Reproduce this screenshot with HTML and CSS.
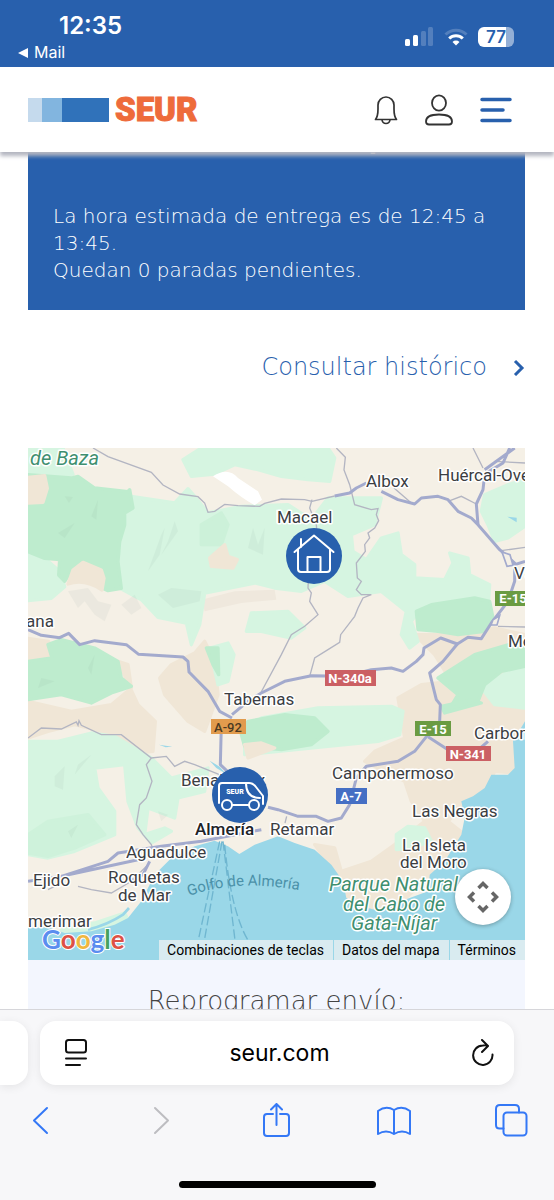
FILE: index.html
```html
<!DOCTYPE html>
<html lang="es">
<head>
    <meta charset="UTF-8">
    <meta name="viewport" content="width=device-width, initial-scale=1.0">
    <title>SEUR - Seguimiento de envío</title>
    <link rel="stylesheet" href="styles.css">
</head>
<body>
    <div class="status-bar">
        <div class="status-left">
            <span class="clock">12:35</span>
            <a class="back-app" href="#mail"><svg width="10" height="10" viewBox="0 0 10 10"><path d="M10 0v10L0 5z" fill="currentColor"/></svg>Mail</a>
        </div>
        <div class="status-right">
            <svg width="29" height="20" viewBox="0 0 29 20" fill="#fff">
                <rect x="0" y="12" width="5" height="7" rx="1.5"/>
                <rect x="8" y="8" width="5" height="11" rx="1.5"/>
                <rect x="16" y="4" width="5" height="15" rx="1.5" opacity=".2"/>
                <rect x="23" y="0" width="5" height="19" rx="1.5" opacity=".2"/>
            </svg>
            <svg width="24" height="20" viewBox="0 0 24 20" fill="none" stroke="#fff" stroke-width="3">
                <path d="M1.5 7.5a15 15 0 0 1 21 0" opacity=".2"/>
                <path d="M5.200 11.500a9.800 9.800 0 0 1 13.600 0"/>
                <path d="M8.500 15a5 5 0 0 1 7 0L12 18.500z" fill="#fff" stroke="none"/>
            </svg>
            <span class="battery">77</span>
        </div>
    </div>

    <header class="header">
        <a class="logo" href="/" aria-label="SEUR">
            <span class="logo-bars"><i></i><i></i><i></i></span>
            <span class="logo-name">SEUR</span>
        </a>
        <nav class="nav">
            <button type="button" aria-label="Notificaciones">
                <svg width="24" height="30" viewBox="0 0 24 30" fill="none" stroke="#333" stroke-width="1.700" stroke-linejoin="round">
                    <path d="M1.500 24.500C3.500 22 4 18.500 4 14V10a8 8 0 0 1 16 0v4c0 4.500.5 8 2.500 10.500z"/>
                    <path d="M8 24.500a4 4 0 0 0 8 0"/>
                </svg>
            </button>
            <button type="button" aria-label="Mi cuenta">
                <svg width="28" height="32" viewBox="0 0 28 32" fill="none" stroke="#333" stroke-width="1.800">
                    <ellipse cx="14" cy="9" rx="7" ry="7.700"/>
                    <path d="M4 30.500Q1 30.500 1 27.500C1 22.500 6 20.500 14 20.500s13 2 13 7q0 3-3 3z"/>
                </svg>
            </button>
            <button type="button" aria-label="Menú">
                <svg width="32" height="26" viewBox="0 0 32 26" fill="none" stroke="#2860ad" stroke-width="3.500" stroke-linecap="round">
                    <path d="M2 2.500h28M2 13h21M2 23.500h28"/>
                </svg>
            </button>
        </nav>
    </header>

    <main class="content">
        <section class="delivery-card">
            <h1>Tu envío está en reparto</h1>
            <p>La hora estimada de entrega es de 12:45 a 13:45.<br>Quedan 0 paradas pendientes.</p>
        </section>

        <a class="history-link" href="#historico">Consultar histórico
            <svg width="12" height="18" viewBox="0 0 12 18" fill="none" stroke="currentColor" stroke-width="3"><path d="M2 3l7 7-7 7"/></svg>
        </a>

        <section class="map" aria-label="Mapa">
            <!-- terrain and roads -->
            <svg class="map-layer" viewBox="0 0 1491 1536" preserveAspectRatio="xMidYMid slice">
                <rect width="1491" height="1536" fill="#f5f0e6"/>

                <g class="beige">
                    <path d="M0 571L62 580 72 620 40 640 0 645z"/>
                    <path d="M270 640L300 650 310 720 250 770 130 790 0 760V870L60 850 140 830 260 860 330 915 375 910 382 820 330 770z"/>
                    <path d="M430 650L500 615 530 580 560 640 570 740 530 850 480 820 410 740 395 690z"/>
                    <path d="M1160 560L1290 560 1400 540 1491 560V756H1491V960L1460 975 1400 970 1370 1040 1320 1055 1260 1120 1310 1160 1280 1240 1200 1290 1100 1380 1040 1440 960 1380 930 1290 860 1190 920 1200 940 1270 1030 1240 1100 1190 1190 1120 1150 1060 1130 1000 1010 940 1040 910 1130 870 1110 750 1180 710 1270 700 1220 620z"/>
                </g>
                <path d="M520 455L620 430 740 425 745 455 640 465 530 490z" fill="#efe8dd"/>

                <g class="green-light">
                    <path d="M0 0H105L135 80 0 90z"/>
                    <path d="M465 35L520 0H900L920 30 905 100 840 95 760 85 690 65 620 50 560 78 490 85z"/>
                    <path d="M290 142L440 165 480 122 500 145 540 195 640 175 780 170 850 215 900 150 1060 150 1040 230 970 260 975 310 1015 335 1060 270 1110 255 1120 320 1160 350 1160 390 1250 395 1275 345 1265 315 1320 330 1325 380 1385 410 1380 480 1180 480 1150 520 1170 580 1145 600 1120 560 1135 490 1060 430 960 445 890 400 820 430 740 420 680 405 530 435 515 530 490 590 475 525 390 508 340 455 275 420 270 350z"/>
                    <path d="M0 311L50 331 95 370 110 416 70 451 0 458z"/>
                    <path d="M1370 140L1440 110 1491 95V235L1440 270 1400 280 1380 230 1360 190z"/>
                    <path d="M670 495L780 490 830 540 790 570 700 550 655 550z"/>
                    <path d="M545 600L600 585 618 620 600 700 570 710z"/>
                    <path d="M0 880L90 880 190 855 260 865 370 930 430 990 540 960 530 1030 450 1050 440 1110 360 1080 350 1160 410 1140 430 1150 370 1185 330 1140 300 1060 290 950 200 960 210 1020 260 1090 260 1160 140 1210 60 1230 0 1220z"/>
                    <path d="M650 850L700 810 870 780 1090 775 1125 790 1115 860 1050 880 900 895 650 920z"/>
                    <path d="M1360 720L1491 640V780L1400 770z"/>
                    <path d="M1105 1160L1140 1135 1190 1140 1210 1180 1150 1200 1105 1205z"/>
                    <path d="M100 1445L200 1425 290 1395 300 1415 220 1460 130 1470z"/>
                </g>

                <g class="green">
                    <path d="M0 80L130 90 150 85 200 120 300 131 305 125 315 180 290 195 290 231 275 281 270 341 280 421 240 428 222 420 215 390 170 345 130 370 110 400 92 381 95 335 50 331 0 311z"/>
                    <path d="M1165 490L1210 470 1340 450 1385 460 1395 510 1370 550 1290 560 1230 550 1170 545z"/>
                    <path d="M60 590L100 575 200 600 270 640 280 690 310 715 250 735 190 765 100 740 0 755V640L72 630z"/>
                    <path d="M1230 690L1340 620 1491 575V655L1420 670 1370 710 1350 760 1260 790 1290 740z"/>
                    <path d="M640 860L660 820 770 800 860 810 900 850 850 890 760 905 650 895z"/>
                    <path d="M535 600L570 600 572 680 555 650z"/>
                    <path d="M1240 775L1330 756 1360 765 1250 795z"/>
                    <path d="M520 230L580 195 600 230 580 290 520 290z" opacity=".4"/>
                    <path d="M0 1160L60 1120 180 1100 230 1160 140 1200 60 1225 0 1215z" opacity=".3"/>
                </g>

                <g class="beige">
                    <path d="M0 88L50 83 58 121 45 163 0 165z"/>
                    <path d="M120 408L135 366 165 343 220 366 228 391 222 426Q170 391 120 408z"/>
                    <path d="M545 330L590 290 600 325 628 335 615 360 550 355z"/>
                    <path d="M650 890L700 885 740 900 660 930z"/>
                </g>

                <!-- relief shading -->
                <g fill="#7f9a91" opacity=".08">
                    <path d="M110 145l25 2-12 18zM90 255l50-30-30 45zM190 205l20-50-5 60zM360 370l40-110 10-20-15 80zM420 280l20-60 10 30-50 70zM660 300l15-60 15 50 20-50-5 80zM390 440l40-20 90 10-5 30-80 20z"/>
                    <path d="M120 430l60-10 30 40 40 10-20 50-30-20-30-40-20 20zM280 470l40-30 20 40-30 20zM40 690l40 10-50 20zM180 660l20-40-10 60z"/>
                    <path d="M80 985l30-30-5 70-25-10zM150 950l40-30-50 60zM120 1150l30-20-20 40zM390 1090l30 10-20 20zM850 330l60 30-40 40z"/>
                </g>

                <path d="M555 85Q600 55 630 90L690 130 702 155 680 172Q640 150 600 115zM745 185l6 0v45l-6-5z" fill="#fff"/>

                <g class="water">
                    <path d="M0 1440L60 1438 110 1455 190 1450 260 1430 300 1410 340 1360 380 1280 430 1230 500 1195 560 1178 600 1195 634 1218 680 1190 750 1165 800 1185 860 1205 910 1250 945 1300 955 1350 1000 1375 1040 1385 1090 1370 1200 1330 1205 1280 1250 1240 1300 1160 1310 1110 1300 1060 1335 1045 1370 1020 1390 980 1440 980 1460 960 1455 880 1491 820V1536H0z"/>
                    <path d="M1438 206l28 3v14zM393 890l40 6-20 2zM545 938l30 18 20 22-30-18z"/>
                </g>
                <path d="M180 1445Q240 1430 285 1400l18-20" fill="none" stroke="#9ad7e8" stroke-width="8"/>

                <path class="ferry" d="M575 1180L508 1490M582 1180L525 1500M585 1180L622 1485M590 1190Q610 1400 665 1485"/>

                <g class="road-thin">
                    <path d="M195 0L240 26 370 73 405 111 455 138 510 146 530 165 540 193 560 190 590 169 630 173 695 175 710 166 760 153 830 155 852 160 920 144"/>
                    <path d="M925 0L952 28 948 66 965 110 980 170 1030 185 1050 182 1045 200 1052 218 1040 240 1020 255 1025 270 1010 290 1012 310 985 345 988 390 1000 400 985 425 1000 440 1030 440 1005 450 990 480 980 505 938 560 935 583 900 605 860 630 845 685"/>
                    <path d="M852 155L845 180 865 230 870 300 842 370 840 420 850 435 845 460 870 500 830 535 790 560 760 620 698 735"/>
                    <path d="M0 870L40 840 100 843 145 822 150 832 153 818 160 832 220 860 280 860 370 930 415 925 440 955 470 940 500 950 580 982"/>
                    <path d="M370 930L355 950 372 1000 355 1050 335 1070 325 1130 345 1160 370 1190 375 1205"/>
                    <path d="M1335 0L1365 60M1400 40L1491 45M1410 535L1491 537M1260 160L1300 145 1345 168M1420 308L1491 298M1098 120L1150 165M776 1105l-5 20"/>
                    <path d="M150 1315L190 1325 250 1335 310 1300 360 1250M60 1325l20-10"/>
                </g>

                <g class="road">
                    <path d="M0 545L40 562 95 569 122 556 155 590 200 578 295 590 332 619 465 627 480 640 483 672 540 730 575 790 612 810"/>
                    <path d="M580 830L577 950 640 1010M612 800L660 760 700 735 770 700 850 683 950 685 1030 665 1090 660 1125 670 1165 640 1185 620 1188 600 1238 570 1288 588 1320 568 1360 572 1390 525 1440 460 1460 400 1460 345 1415 305 1350 230 1330 210 1290 190 1260 155 1230 145 1180 150 1160 168 1110 155 1060 130M1015 105L985 120 965 135 920 144"/>
                    <path d="M1288 588L1245 640 1205 675 1225 755 1237 770 1235 820 1200 860 1160 910 1110 940 1015 955 985 990 965 1070 940 1110 900 1120 865 1105 810 1105 750 1085 720 1078"/>
                    <path d="M1350 230L1345 168 1365 125 1370 80M1370 65L1460 0M1375 75L1425 45 1445 0M1200 866L1260 905M1380 880l-25 22"/>
                    <path d="M0 1300L100 1285 240 1240 270 1215 400 1195 520 1180 700 1145M100 1285L330 1235M365 1240l-20 40-40 20M1440 330L1460 350 1491 340"/>
                </g>
                <path d="M1422 312l24 8 9 32-18 3zM1395 515l20-12-8 28-18 0z" fill="#f5f0e6" stroke="#a3aacd" stroke-width="5"/>
            </svg>

            <!-- labels and markers -->
            <svg class="map-layer map-labels" viewBox="0 0 497 512" preserveAspectRatio="xMidYMid slice">
                <text class="park" x="2" y="17">de Baza</text>
                <text x="338" y="39">Albox</text>
                <text x="410" y="33">Huércal-Overa</text>
                <text x="249" y="75">Macael</text>
                <text x="-2" y="179">ana</text>
                <text x="486" y="131">Vera</text>
                <text x="480" y="199">Mojácar</text>
                <text x="196" y="257">Tabernas</text>
                <text x="446" y="291">Carboneras</text>
                <text x="304" y="331">Campohermoso</text>
                <text x="153" y="338">Benahadux</text>
                <text x="384" y="369">Las Negras</text>
                <text class="city" x="167" y="387">Almería</text>
                <text x="242" y="387">Retamar</text>
                <text x="98" y="410">Aguadulce</text>
                <text x="374" y="403">La Isleta</text>
                <text x="372" y="420">del Moro</text>
                <text x="5" y="438">Ejido</text>
                <text x="80" y="435">Roquetas</text>
                <text x="90" y="453">de Mar</text>
                <text x="0" y="479">merimar</text>
                <path id="gulf" d="M161 448Q210 430 275 443" fill="none"/>
                <text class="sea"><textPath href="#gulf">Golfo de Almería</textPath></text>
                <text class="park" x="301" y="443">Parque Natural</text>
                <text class="park" x="315" y="463">del Cabo de</text>
                <text class="park" x="323" y="482">Gata-Níjar</text>

                <g class="shield">
                    <rect x="297" y="222" width="51" height="16" fill="#cb6064"/><text x="322" y="235">N-340a</text>
                    <rect x="183" y="271" width="35" height="15" fill="#e19b4d"/><text class="dark" x="200" y="284">A-92</text>
                    <rect x="467" y="143" width="36" height="15" fill="#6a9b42"/><text x="485" y="155">E-15</text>
                    <rect x="387" y="273" width="36" height="15" fill="#6a9b42"/><text x="405" y="286">E-15</text>
                    <rect x="418" y="298" width="45" height="15" fill="#cb6064"/><text x="440" y="311">N-341</text>
                    <rect x="308" y="340" width="31" height="16" fill="#456fc4"/><text x="323" y="353">A-7</text>
                </g>

                <g class="marker">
                    <circle cx="286" cy="108" r="28"/>
                    <path d="M266.500 104L286 87.500 305.500 104M273 99V91M270 101V121Q270 124 273 124H299Q302 124 302 121V101M279.500 124V109H292.500V124"/>
                </g>
                <g class="marker">
                    <circle cx="212" cy="347" r="28"/>
                    <path d="M191 355V338Q191 335 194 335H221Q225 335 228 339L235 348V356M204 357H221M218 335C218 344 222 350 232 350" stroke-width="1.500"/>
                    <circle class="wheel" cx="199" cy="357" r="5"/>
                    <circle class="wheel" cx="226" cy="357" r="5"/>
                    <text x="207" y="346">SEUR</text>
                </g>
            </svg>

            <button class="pan-button" type="button" aria-label="Controles de la cámara del mapa">
                <svg width="32" height="32" viewBox="0 0 32 32" fill="none" stroke="#666" stroke-width="3.500"><path d="M11.500 7l4.500-4.500L20.500 7M11.500 25l4.500 4.500 4.500-4.500M7 11.500L2.500 16 7 20.500M25 11.500l4.500 4.500-4.500 4.500"/></svg>
            </button>
            <a class="google" href="#google" aria-label="Google"><span class="g-blue">G</span><span class="g-red">o</span><span class="g-yellow">o</span><span class="g-blue">g</span><span class="g-green">l</span><span class="g-red">e</span></a>
            <div class="map-footer">
                <button type="button">Combinaciones de teclas</button>
                <a href="#datos">Datos del mapa</a>
                <a href="#terminos">Términos</a>
            </div>
        </section>

        <section class="reschedule">
            <h2>Reprogramar envío:</h2>
        </section>
    </main>

    <footer class="browser">
        <div class="tabs">
            <div class="tab-peek"></div>
            <div class="address-bar">
                <button type="button" aria-label="Opciones de página">
                    <svg width="22" height="28" viewBox="0 0 22 28" fill="none" stroke="#111" stroke-width="2" stroke-linecap="round"><rect x="1" y="1" width="20" height="12.500" rx="2.500"/><path d="M1 19.500h20M1 26h14"/></svg>
                </button>
                <input type="text" value="seur.com" aria-label="Dirección">
                <button type="button" aria-label="Recargar">
                    <svg width="22" height="28" viewBox="0 0 22 28" fill="none" stroke="#111" stroke-width="2" stroke-linecap="round" stroke-linejoin="round"><path d="M20.500 15.500A9.700 9.700 0 1 1 10.800 6.500Q14 6 16 7M10 1l6 6-6 6"/></svg>
                </button>
            </div>
        </div>
        <div class="toolbar">
            <button type="button" aria-label="Atrás">
                <svg width="34" height="34" viewBox="0 0 34 34"><path d="M23 5L10 17.500 23 30"/></svg>
            </button>
            <button type="button" aria-label="Adelante" disabled>
                <svg width="34" height="34" viewBox="0 0 34 34"><path d="M13 5l13 12.500L13 30"/></svg>
            </button>
            <button type="button" aria-label="Compartir">
                <svg width="34" height="34" viewBox="0 0 34 34"><path d="M14 11H8q-3 0-3 3v16q0 3 3 3h19q3 0 3-3V14q0-3-3-3h-6M17.500 22V1.500M12 6.500l5.500-5.500L23 6.500"/></svg>
            </button>
            <button type="button" aria-label="Marcadores">
                <svg width="34" height="34" viewBox="0 0 34 34"><path d="M17 7v24Q9 26 1 31V8q8-6 16-1 8-5 16 1v23q-8-5-16 0"/></svg>
            </button>
            <button type="button" aria-label="Pestañas">
                <svg width="34" height="34" viewBox="0 0 34 34"><rect x="9.500" y="9.500" width="23" height="23" rx="3.500"/><path d="M9.500 25.500H5.500q-3.500 0-3.500-3.500V6q0-4 4-4h15q4 0 4 4v3.500"/></svg>
            </button>
        </div>
        <div class="home-indicator"></div>
    </footer>
</body>
</html>
```
FILE: styles.css
```css
:root {
    --blue: #2860ad;
    --orange: #ee6b3b;
    --ios-blue: #3478f6;
    --panel: #f3f6fe;
}

* {
    box-sizing: border-box;
}

body {
    font-family: 'DejaVu Sans', sans-serif;
    font-weight: 200;
    margin: 0;
    height: 100vh;
    display: flex;
    flex-direction: column;
    overflow: hidden;
    background: white;
}

button {
    background: none;
    border: 0;
    padding: 0;
    margin: 0;
    cursor: pointer;
}

a {
    text-decoration: none;
}

svg {
    display: block;
}

/* Status bar */
.status-bar {
    display: flex;
    justify-content: space-between;
    flex: none;
    padding: 10px 40px 4px 18px;
    background: var(--blue);
    color: white;
    font-family: Inter, sans-serif;
    font-weight: 400;
}

.status-left {
    display: flex;
    flex-direction: column;
}

.clock {
    padding-left: 41px;
    font-size: 24px;
    font-weight: 600;
    line-height: 32px;
}

.back-app {
    display: flex;
    align-items: center;
    gap: 6px;
    color: white;
    font-size: 16px;
    line-height: 21px;
}

.status-right {
    display: flex;
    align-items: center;
    gap: 10px;
}

.battery {
    width: 36px;
    height: 20px;
    border-radius: 6px;
    background: linear-gradient(90deg, white 77%, #93afd6 77%);
    color: var(--blue);
    font-size: 17px;
    font-weight: 600;
    line-height: 20px;
    text-align: center;
}

/* Header */
.header {
    position: relative;
    z-index: 1;
    display: flex;
    align-items: center;
    justify-content: space-between;
    flex: none;
    height: 85px;
    padding: 0 42px 0 28px;
    background: white;
    box-shadow: 0 4px 4px #b4b6c0;
}

.logo {
    display: flex;
    align-items: center;
    gap: 6px;
}

.logo-bars {
    display: flex;
    height: 24px;
}

.logo-bars i {
    width: 14px;
    background: #c5daed;
}

.logo-bars i:nth-child(2) {
    width: 20px;
    background: #82b5df;
}

.logo-bars i:nth-child(3) {
    width: 47px;
    background: #3072ba;
}

.logo-name {
    color: var(--orange);
    font-family: Roboto, sans-serif;
    font-size: 33px;
    font-weight: 900;
    line-height: 34px;
    -webkit-text-stroke: 1px var(--orange);
}

.nav {
    display: flex;
    align-items: center;
    gap: 27px;
}

/* Content */
.content {
    flex: 1;
    min-height: 0;
    overflow: hidden;
    padding: 0 29px 0 28px;
}

.delivery-card {
    margin-top: -40px;
    padding: 12px 25px 26px;
    background: var(--blue);
    color: white;
}

.delivery-card h1 {
    margin: 0 0 45px;
    font-size: 24px;
    font-weight: 700;
    line-height: 34px;
    text-align: center;
}

.delivery-card p {
    margin: 0;
    font-size: 20px;
    line-height: 27px;
}

.history-link {
    display: flex;
    align-items: center;
    justify-content: flex-end;
    gap: 26px;
    margin: 41px 0 65px;
    color: var(--blue);
    font-size: 24px;
    line-height: 32px;
}

/* Map */
.map {
    position: relative;
    aspect-ratio: 497 / 512;
    overflow: hidden;
    font-family: Roboto, sans-serif;
    font-weight: 400;
}

.map-layer {
    position: absolute;
    inset: 0;
    width: 100%;
    height: 100%;
}

.beige,
.green,
.green-light {
    stroke-width: 10;
    stroke-linejoin: round;
}

.beige {
    fill: #f0e6d6;
    stroke: #f0e6d6;
}

.green-light {
    fill: #d6f5e1;
    stroke: #d6f5e1;
}

.green {
    fill: #beecce;
    stroke: #beecce;
}

.water {
    fill: #9ad7e8;
}

.ferry {
    fill: none;
    stroke: #6fb6d0;
    stroke-width: 4;
    stroke-dasharray: 28 10;
}

.road-thin {
    fill: none;
    stroke: #b3b5c2;
    stroke-width: 4;
}

.road {
    fill: none;
    stroke: #a3aacd;
    stroke-width: 9;
    stroke-linejoin: round;
}

.map-labels text {
    fill: #3b3d42;
    stroke: white;
    stroke-width: 3px;
    stroke-linejoin: round;
    paint-order: stroke;
    font-size: 17px;
}

.map-labels .city {
    fill: #202226;
    font-weight: 500;
}

.map-labels .park {
    fill: #3f8f70;
    font-size: 20px;
    font-style: italic;
}

.map-labels .sea {
    fill: #4b91a8;
    stroke: none;
    font-size: 15px;
}

.map-labels .shield text {
    fill: white;
    stroke: none;
    font-size: 13px;
    font-weight: 700;
    text-anchor: middle;
}

.map-labels .shield .dark {
    fill: #4b3a22;
    font-weight: 500;
}

.marker {
    fill: var(--blue);
}

.marker path,
.marker .wheel {
    stroke: white;
    stroke-width: 2;
    stroke-linecap: round;
    stroke-linejoin: round;
}

.marker path {
    fill: none;
}

.map-labels .marker text {
    fill: white;
    stroke: none;
    font-size: 7px;
    font-weight: 900;
    text-anchor: middle;
}

.pan-button {
    position: absolute;
    right: 14px;
    bottom: 35px;
    display: grid;
    place-items: center;
    width: 56px;
    height: 56px;
    border-radius: 50%;
    background: white;
    box-shadow: 0 1px 4px rgba(0,0,0,0.3);
}

.google {
    position: absolute;
    left: 14px;
    bottom: 6px;
    font-family: Lato, sans-serif;
    font-size: 26px;
    font-weight: 700;
    line-height: 30px;
    -webkit-text-stroke: 2px white;
    paint-order: stroke fill;
}

.g-blue { color: #5b8def; }
.g-red { color: #dd5145; }
.g-yellow { color: #efb73e; }
.g-green { color: #46a35e; }

.map-footer {
    position: absolute;
    right: 0;
    bottom: 0;
    display: flex;
    gap: 1px;
}

.map-footer button,
.map-footer a {
    padding: 0 9px 0 8px;
    background: #d9ebf0;
    color: black;
    font-family: Roboto, sans-serif;
    font-size: 14px;
    line-height: 20px;
}

.reschedule {
    padding: 24px 0;
    background: var(--panel);
}

.reschedule h2 {
    margin: 0;
    color: #444;
    font-size: 26px;
    font-weight: 200;
    line-height: 34px;
    text-align: center;
}

/* Browser chrome */
.browser {
    flex: none;
    border-top: 1px solid #d6d6da;
    padding: 11px 0 12px;
    background: #f7f7f9;
}

.tabs {
    display: flex;
    gap: 12px;
    padding-right: 40px;
}

.tab-peek {
    width: 28px;
    border-radius: 0 16px 16px 0;
    background: white;
    box-shadow: 0 2px 10px rgba(0,0,0,0.08);
}

.address-bar {
    display: flex;
    align-items: center;
    flex: 1;
    height: 64px;
    padding: 0 20px 0 25px;
    border-radius: 16px;
    background: white;
    box-shadow: 0 2px 10px rgba(0,0,0,0.08);
}

.address-bar input {
    flex: 1;
    min-width: 0;
    border: 0;
    background: none;
    color: black;
    font-family: Inter, sans-serif;
    font-size: 23px;
    text-align: center;
}

.toolbar {
    display: flex;
    justify-content: space-between;
    padding: 18px 26px 44px 24px;
}

.toolbar svg {
    fill: none;
    stroke: var(--ios-blue);
    stroke-width: 2;
    stroke-linecap: round;
    stroke-linejoin: round;
}

.toolbar button:disabled svg {
    stroke: #bdbdc1;
}

.home-indicator {
    width: 197px;
    height: 7px;
    margin: 0 auto;
    border-radius: 4px;
    background: black;
}
```
